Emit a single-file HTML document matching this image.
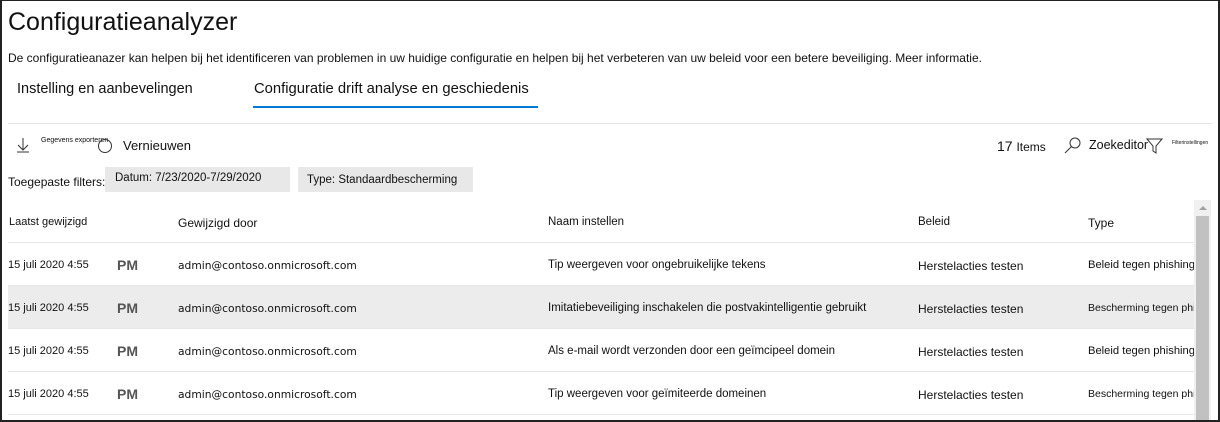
<!DOCTYPE html>
<html><head><meta charset="utf-8"><style>
*{margin:0;padding:0;box-sizing:border-box}
body{width:1220px;height:422px;background:#fff;font-family:"Liberation Sans",Arial,sans-serif;color:#111;position:relative;overflow:hidden}
.frame{position:absolute;left:0;top:0;width:1220px;height:422px;border:2px solid #222;border-top:1px solid #222}
.a{position:absolute;white-space:nowrap}
.row{position:absolute;left:8px;width:1186px;height:43px;border-bottom:1px solid #e6e6e6;overflow:hidden}
.c{position:absolute;top:16px;font-size:12px;white-space:nowrap}
.pm{position:absolute;left:109px;top:14px;font-size:14px;font-weight:bold;color:#555}
.em{position:absolute;left:170px;top:16px;font-family:"DejaVu Sans",sans-serif;font-size:10.7px}
</style></head><body>
<div class="a" style="left:8px;top:8px;font-size:25px">Configuratieanalyzer</div>
<div class="a" style="left:8px;top:51px;font-size:12px">De configuratieanazer kan helpen bij het identificeren van problemen in uw huidige configuratie en helpen bij het verbeteren van uw beleid voor een betere beveiliging. Meer informatie.</div>
<div class="a" style="left:17px;top:81px;font-size:14.5px">Instelling en aanbevelingen</div>
<div class="a" style="left:254px;top:81px;font-size:14.8px">Configuratie drift analyse en geschiedenis</div>
<div class="a" style="left:253px;top:106px;width:285px;height:2px;background:#0078d4"></div>
<div class="a" style="left:8px;top:123px;width:1204px;height:1px;background:#e5e5e5"></div>
<svg class="a" style="left:16px;top:137px" width="14" height="16"><path d="M7 1v12M2 8l5 5 5-5M1 15h12" stroke="#333" fill="none" stroke-width="1"/></svg>
<div class="a" style="left:41px;top:137px;font-size:7px">Gegevens exporteren</div>
<svg class="a" style="left:97px;top:138px" width="16" height="16"><circle cx="8" cy="8" r="6.5" stroke="#333" fill="none"/></svg>
<div class="a" style="left:123px;top:138px;font-size:13px">Vernieuwen</div>
<div class="a" style="left:997px;top:138px;font-size:14px">17 <span style="font-size:12px">Items</span></div>
<svg class="a" style="left:1064px;top:136px" width="18" height="18"><circle cx="11" cy="7" r="5" stroke="#333" fill="none"/><path d="M7.5 10.5L1 17" stroke="#333"/></svg>
<div class="a" style="left:1089px;top:138px;font-size:12.5px">Zoekeditor</div>
<svg class="a" style="left:1146px;top:138px" width="17" height="16"><path d="M1 1h15l-6 7v7l-3-2V8z" stroke="#333" fill="none"/></svg>
<div class="a" style="left:1172px;top:140px;font-size:5px">Filterinstellingen</div>
<div class="a" style="left:8px;top:175px;font-size:12px">Toegepaste filters:</div>
<div class="a" style="left:105px;top:167px;width:185px;height:25px;background:#e8e8e8;font-size:11.5px;padding:5px 0 0 10px">Datum: 7/23/2020-7/29/2020</div>
<div class="a" style="left:298px;top:167px;width:175px;height:25px;background:#e8e8e8;font-size:11.5px;padding:7px 0 0 9px">Type: Standaardbescherming</div>
<div class="row" style="top:200px"><div class="c" style="left:1px;font-size:11px">Laatst gewijzigd</div><div class="c" style="left:170px">Gewijzigd door</div><div class="c" style="left:540px;font-size:11.5px">Naam instellen</div><div class="c" style="left:910px;font-size:11.5px">Beleid</div><div class="c" style="left:1080px">Type</div></div>
<div class="row" style="top:243px"><div class="c" style="left:0;font-size:11px">15 juli 2020 4:55</div><div class="pm">PM</div><div class="em">admin@contoso.onmicrosoft.com</div><div class="c" style="left:540px;font-size:11.5px">Tip weergeven voor ongebruikelijke tekens</div><div class="c" style="left:910px">Herstelacties testen</div><div class="c" style="left:1080px;font-size:11.2px">Beleid tegen phishing</div></div>
<div class="row" style="top:286px;background:#ececec"><div class="c" style="left:0;font-size:11px">15 juli 2020 4:55</div><div class="pm">PM</div><div class="em">admin@contoso.onmicrosoft.com</div><div class="c" style="left:540px;font-size:11.5px">Imitatiebeveiliging inschakelen die postvakintelligentie gebruikt</div><div class="c" style="left:910px">Herstelacties testen</div><div class="c" style="left:1080px;font-size:10.5px">Bescherming tegen phishing</div></div>
<div class="row" style="top:329px"><div class="c" style="left:0;font-size:11px">15 juli 2020 4:55</div><div class="pm">PM</div><div class="em">admin@contoso.onmicrosoft.com</div><div class="c" style="left:540px;font-size:11.5px">Als e-mail wordt verzonden door een geïmcipeel domein</div><div class="c" style="left:910px">Herstelacties testen</div><div class="c" style="left:1080px;font-size:11.2px">Beleid tegen phishing</div></div>
<div class="row" style="top:372px"><div class="c" style="left:0;font-size:11px">15 juli 2020 4:55</div><div class="pm">PM</div><div class="em">admin@contoso.onmicrosoft.com</div><div class="c" style="left:540px;font-size:11.5px">Tip weergeven voor geïmiteerde domeinen</div><div class="c" style="left:910px">Herstelacties testen</div><div class="c" style="left:1080px;font-size:10.5px">Bescherming tegen phishing</div></div>
<div class="a" style="left:1194px;top:200px;width:17px;height:222px;background:#f0f0f0"></div>
<div class="a" style="left:1199px;top:206px;width:0;height:0;border-left:4px solid transparent;border-right:4px solid transparent;border-bottom:4px solid #a0a0a0"></div>
<div class="a" style="left:1196px;top:216px;width:13px;height:206px;background:#c1c1c1"></div>
<div class="frame"></div>
</body></html>
